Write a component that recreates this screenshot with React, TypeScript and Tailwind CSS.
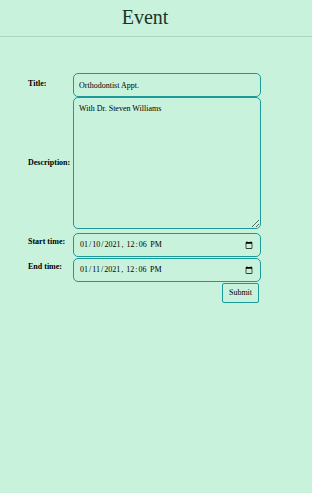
export default function App() {
  const inputCls =
    "w-[188px] rounded-[5px] border border-[#1b9a9a] bg-transparent px-[5px] text-[8px] text-black outline-none";

  return (
    <div className="min-h-[493px] w-full bg-[#c9f2dc] font-['Liberation_Serif',serif] text-black">
      <header className="flex h-[37px] items-center justify-center border-b border-[#a9d6c0] pb-[2px] pr-[22px]">
        <h1 className="text-[20px] leading-none text-[#1d3328]">Event</h1>
      </header>

      <form className="flex flex-col pl-[28px] pt-[36px]" onSubmit={(e) => e.preventDefault()}>
        <div className="flex items-center">
          <label className="w-[45px] pb-[3px] text-[8px] font-bold">Title:</label>
          <input type="text" defaultValue="Orthodontist Appt." className={`${inputCls} h-[24px]`} />
        </div>

        <div className="flex items-center">
          <label className="w-[45px] text-[8px] font-bold">Description:</label>
          <textarea
            defaultValue="With Dr. Steven Williams"
            className={`${inputCls} h-[132px] py-[6px] leading-[10px]`}
          />
        </div>

        <div className="mt-[4px] flex items-center">
          <label className="w-[45px] pb-[6px] text-[8px] font-bold">Start time:</label>
          <input type="datetime-local" defaultValue="2021-01-10T12:06" className={`${inputCls} h-[24px]`} />
        </div>

        <div className="mt-[1px] flex items-center">
          <label className="w-[45px] pb-[6px] text-[8px] font-bold">End time:</label>
          <input type="datetime-local" defaultValue="2021-01-11T12:06" className={`${inputCls} h-[24px]`} />
        </div>

        <div className="flex w-[231px] justify-end">
          <button
            type="submit"
            className="mt-[1px] h-[20px] w-[37px] rounded-[2px] border border-[#1b9a9a] bg-transparent text-[8px]"
          >
            Submit
          </button>
        </div>
      </form>
    </div>
  );
}
